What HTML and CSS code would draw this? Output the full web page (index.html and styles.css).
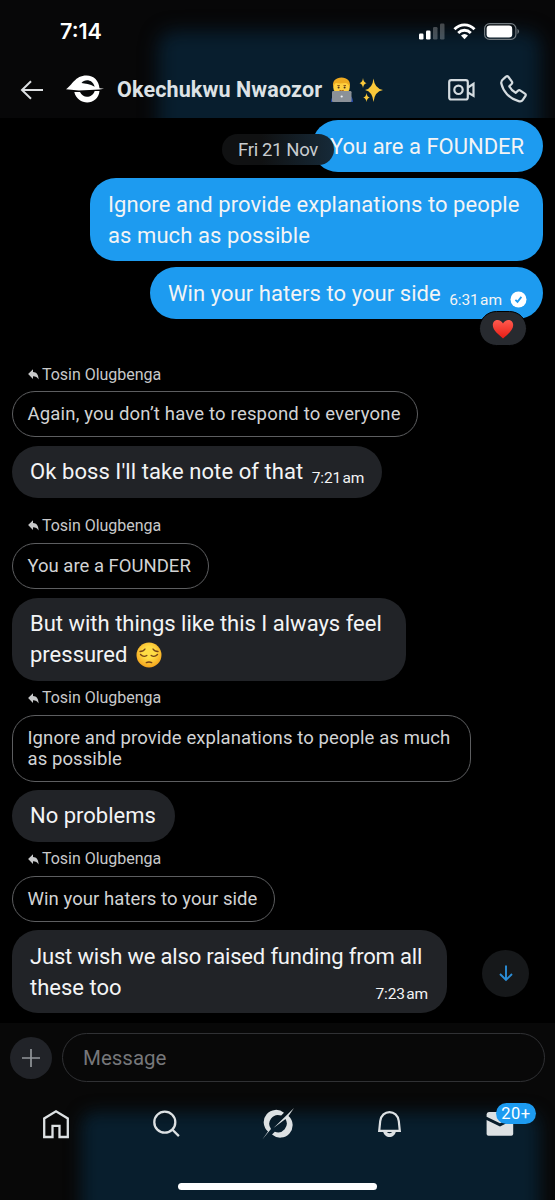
FILE: index.html
```
<!DOCTYPE html>
<html lang="en">
<head>
<meta charset="utf-8">
<title>Okechukwu Nwaozor</title>
<link rel="stylesheet" href="styles.css">
</head>
<body>
<svg class="defs" width="0" height="0" aria-hidden="true">
  <defs>
    <symbol id="reply" viewBox="0 0 11 11"><path d="M5 .3v2.600c3.500.2 5.500 2.400 5.600 7.600C9.300 8.200 7.700 7.300 5 7.300V10L.1 5z" fill="currentColor"/></symbol>
    <radialGradient id="face" cx=".5" cy=".4" r=".6"><stop offset=".4" stop-color="#ffdc45"/><stop offset="1" stop-color="#f5a31c"/></radialGradient>
    <linearGradient id="heart" x2="0" y2="1"><stop stop-color="#ff5b4f"/><stop offset="1" stop-color="#e81c14"/></linearGradient>
  </defs>
</svg>
<div class="phone">
  <header class="top">
    <div class="status">
      <span class="clock">7:14</span>
      <span class="indicators">
        <svg width="26" height="17" viewBox="0 0 26 17"><g fill="#fff"><rect x="0" y="10.500" width="4.500" height="6" rx="1.200"/><rect x="7" y="7.500" width="4.500" height="9" rx="1.200"/><g opacity=".25"><rect x="14" y="4" width="4.500" height="12.500" rx="1.200"/><rect x="21" y="0.500" width="4.500" height="16" rx="1.200"/></g></g></svg>
        <svg width="23" height="17" viewBox="0 0 23 17"><g fill="none" stroke="#fff" stroke-width="2.900"><path d="M1.500 6.200C7.200.400 15.800.400 21.500 6.200"/><path d="M5.200 10C8.900 6.400 14.100 6.400 17.800 10"/></g><path d="M8 12.500q3.500-3 7 0L11.500 16.300z" fill="#fff"/></svg>
        <svg width="36" height="17" viewBox="0 0 36 17"><rect x=".6" y=".6" width="31.300" height="15.800" rx="5" fill="none" stroke="#737b80" stroke-width="1.200"/><rect x="2.600" y="2.600" width="25.600" height="11.800" rx="3.200" fill="#fff"/><path d="M33.500 5.800q3 2.700 0 5.400z" fill="#737b80"/></svg>
      </span>
    </div>
    <div class="titlebar">
      <svg class="back" width="24" height="20" viewBox="0 0 24 20" fill="none" stroke="#dde0e2" stroke-width="2"><path d="M11 1.200 2 10l9 8.800M2 10h21"/></svg>
      <svg class="logo" width="38" height="30" viewBox="0 0 38 30"><path d="M0 15.200C6 11.500 9 1.500 20.500 1.500c7.500 0 12.300 5.300 13 12.700l4.500.6-4.500.8-20.500 1z" fill="#fff"/><path d="M15.500 9C18.500 4.800 26.500 4.800 28.700 12.800 24 10 19 9.500 15.500 9z" fill="#080b0e"/><path d="M8.300 18h5.700c3 7 12.500 6 14.700-1h4.800C32 32 11.500 32 8.300 18z" fill="#fff"/></svg>
      <span class="name">Okechukwu Nwaozor</span>
      <svg class="coder" width="24" height="26" viewBox="0 0 24 26"><path d="M1 25c0-5 3-7 5-7h12c3 0 5 3 5 7z" fill="#2546a5"/><circle cx="11.500" cy="10" r="8.300" fill="#ffd03f"/><path d="M3.200 10C2 4 6 .6 11.500.6S21 4 19.800 10C18.500 8 18 6.500 15.500 6 12 6.500 8 6.500 6 6 4.500 7 4 8 3.200 10z" fill="#eeaa20"/><path d="M7.300 8.500h2.500M13.500 8.500H16" stroke="#90541a"/><circle cx="8.600" cy="10.600" r="1" fill="#473021"/><circle cx="14.600" cy="10.600" r="1" fill="#473021"/><path d="M9.500 13.400q2.100 1 4.200 0" stroke="#a15a1c" fill="none"/><rect x="2" y="14" width="19.500" height="11" rx="1.200" fill="#8b9198"/><circle cx="11.700" cy="19.500" r="1.100" fill="#f2f3f4"/></svg>
      <svg class="sparkles" width="25" height="26" viewBox="0 0 25 26" fill="#fac83a"><path d="M14.500 1.500q1 10 9.500 11.500-8.500 1.500-9.500 12-1-10.500-8.500-12 7.500-1.500 8.500-11.500z"/><path d="M4 1q.5 4.500 3.500 5.200Q4.500 7 4 11 3.500 7 .5 6.200 3.500 5.500 4 1zM7.500 16q.5 4 3.300 4.600-2.800.7-3.300 4.400-.5-3.700-3.300-4.400 2.800-.6 3.300-4.600z"/></svg>
      <svg class="video" width="27" height="22" viewBox="0 0 27 22" fill="none" stroke="#d5dce0" stroke-width="2.200"><rect x="1.200" y="1.200" width="18.600" height="19.300" rx="2"/><circle cx="10.500" cy="10.800" r="4.200"/><path d="M20 8.500l5.500-3.600v12L20 13.500"/></svg>
      <svg class="call" width="27" height="28" viewBox="0 0 27 28" fill="none" stroke="#d5dce0" stroke-width="2.200" stroke-linejoin="round"><path d="M3.200 4.100 6 1.600Q7.300.6 8.500 2l3.400 4.600q.8 1.200-.3 2.400L9.300 11.300q2.300 4.500 6.300 6.500l2.500-2.100q1.100-.9 2.300-.1l4.500 3q1.500 1 .5 2.400l-2.800 4.100q-1.300 1.900-4 1C9 23.500 3 16 1.300 8.600q-.5-2.700 1.900-4.500z"/></svg>
    </div>
  </header>

  <main class="chat">
    <div class="date">Fri 21 Nov</div>
    <div class="bubble sent first">You are a FOUNDER</div>
    <div class="bubble sent explain">Ignore and provide explanations to people<br>as much as possible</div>
    <div class="bubble sent win">Win your haters to your side<span class="time">6:31<i></i>am</span><svg class="seen" width="17" height="17" viewBox="0 0 17 17"><circle cx="8.500" cy="8.500" r="8" fill="#fff"/><path d="m5.400 8.800 2.100 2 3.900-4.900" fill="none" stroke="#1d9bf0" stroke-width="1.800"/></svg>
      <span class="reaction"><svg width="22" height="20" viewBox="0 0 22 20"><path d="M11 19.500C7 16 .8 11.500.8 6.100c0-6 7.500-7 10.200-1.500 2.700-5.500 10.200-4.500 10.200 1.500 0 5.400-6.200 9.900-10.200 13.400z" fill="url(#heart)"/></svg></span>
    </div>

    <div class="reply-to after-reaction"><svg width="11" height="11"><use href="#reply"/></svg>Tosin Olugbenga</div>
    <div class="quote q1">Again, you don’t have to respond to everyone</div>
    <div class="bubble got ok">Ok boss I'll take note of that<span class="time">7:21<i></i>am</span></div>

    <div class="reply-to spaced"><svg width="11" height="11"><use href="#reply"/></svg>Tosin Olugbenga</div>
    <div class="quote q2">You are a FOUNDER</div>
    <div class="bubble got but">But with things like this I always feel<br>pressured <svg class="pensive" width="26" height="26" viewBox="0 0 26 26"><circle cx="13" cy="13" r="12.500" fill="url(#face)"/><g fill="none" stroke="#754417" stroke-width="1.400" stroke-linecap="round"><path d="M4 9.500q3.500 0 5-2.500M22 9.500q-3.500 0-5-2.500M4.500 12.500q3 3.200 6.300 1M21.500 12.500q-3 3.200-6.300 1M10.300 20.600q2.700-1.300 5.400 0"/></g></svg></div>

    <div class="reply-to"><svg width="11" height="11"><use href="#reply"/></svg>Tosin Olugbenga</div>
    <div class="quote q3">Ignore and provide explanations to people as much<br>as possible</div>
    <div class="bubble got no">No problems</div>

    <div class="reply-to"><svg width="11" height="11"><use href="#reply"/></svg>Tosin Olugbenga</div>
    <div class="quote q4">Win your haters to your side</div>
    <div class="bubble got wish">Just wish we also raised funding from all<br><span class="last-line">these too<span class="time">7:23<i></i>am</span></span></div>
    <div class="jump"><svg width="14" height="17" viewBox="0 0 14 17" fill="none" stroke="#2b8ed8" stroke-width="1.900"><path d="M7 .5V15M1 9l6 6 6-6"/></svg></div>
  </main>

  <footer class="bottom">
    <div class="composer">
      <span class="plus"><svg width="18" height="18" viewBox="0 0 18 18" stroke="#92969a" stroke-width="1.700"><path d="M9 0v18M0 9h18"/></svg></span>
      <div class="field">Message</div>
    </div>
    <nav class="tabs">
      <svg width="28" height="30" viewBox="0 0 28 30"><path d="M2.200 28V9.500L14 2.300 25.800 9.500V28h-8.300V16.800h-7V28z" fill="none" stroke="#dde1e3" stroke-width="2.300"/></svg>
      <svg width="28" height="30" viewBox="0 0 28 30" fill="none" stroke="#dde1e3" stroke-width="2.300"><circle cx="12.800" cy="13.200" r="10.500"/><path d="m20.500 20.800 6.400 6.300"/></svg>
      <svg width="32" height="34" viewBox="0 0 32 34" fill="#dde1e3"><path d="M.3 32.500 6 24.500A12.300 12.300 0 0 1 22 5.800L19.200 8.600A8.800 8.800 0 0 0 9 22z"/><path d="M11.500 21 32 1 26.500 9A12.300 12.300 0 0 1 10 27.500L12.800 24.700A8.800 8.800 0 0 0 23.500 12z"/></svg>
      <svg width="28" height="30" viewBox="0 0 28 30"><path d="M3.200 21.900 4.200 12.200C5.500 0 21.500 0 22.800 12.200l1 9.700z" fill="none" stroke="#dde1e3" stroke-width="2.200"/><path d="M7 22h13c-1.500 8-11.500 8-13 0z" fill="#dde1e3"/><path d="M10.800 23h5.400q-2.700 2.500-5.400 0z" fill="#081d2b"/></svg>
      <span class="mail"><svg width="28" height="30" viewBox="0 0 28 30" fill="#dde1e3"><path d="M.6 5.500q0-2.500 2.300-2.500H25q2.200 0 2.200 2.500v2.200L14 14.200.6 7.700z"/><path d="M.6 10.900 14 17.500l13.200-6.600v14q0 1.800-1.900 1.800H2.500q-1.900 0-1.900-1.800z"/></svg><b class="badge">20+</b></span>
    </nav>
    <div class="home-bar"></div>
  </footer>
</div>
</body>
</html>
```

FILE: styles.css
```
* { box-sizing: border-box; }
body { margin: 0; background: #000; font-family: Roboto, "Liberation Sans", sans-serif; color: #f3f4f5; }
svg { display: block; flex: none; }
.defs { position: absolute; }
.phone { position: relative; width: 555px; height: 1200px; overflow: hidden; display: flex; flex-direction: column; background: #000; }

.top { position: relative; height: 118px; flex: none; background: #070708; overflow: hidden; isolation: isolate; }
.top::before { content: ""; position: absolute; z-index: -1; left: 158px; top: 31px; width: 383px; height: 130px; border-radius: 16px; background: #081e2e; filter: blur(9px); }
.status { display: flex; justify-content: space-between; height: 63px; padding: 18px 35px 0 60px; }
.clock { font: 600 21.500px/27px Inter, sans-serif; letter-spacing: 0; color: #fff; }
.indicators { display: flex; gap: 8px; padding-top: 5px; }
.titlebar { display: flex; align-items: center; height: 53px; padding: 0 28px 0 20px; }
.logo { margin: -1px 0 0 22px; }
.name { margin-left: 13px; width: 207px; font-size: 21.500px; font-weight: 700; letter-spacing: .14px; color: #dde2e5; white-space: nowrap; }
.coder { margin-left: 6px; }
.sparkles { margin-left: 5px; }
.video { margin-left: auto; }
.call { margin-left: 25px; margin-top: -1px; }

.chat { position: relative; height: 905px; flex: none; display: flex; flex-direction: column; align-items: flex-start; padding: 2px 12px 0; }
.bubble { position: relative; padding: 10.500px 18px; border-radius: 26px; font-size: 22px; line-height: 31px; white-space: nowrap; }
.sent { align-self: flex-end; margin-bottom: 6px; padding-top: 11px; padding-bottom: 10px; background: #1d9bf0; width: 453px; }
.explain { letter-spacing: .08px; }
.sent.first { width: 231px; }
.sent.win { width: 393px; display: flex; margin-bottom: 0; letter-spacing: .06px; }
.got { background: #212327; margin-top: 8px; }
.ok { width: 370px; display: flex; margin-top: 9px; padding: 10px 18px 11px; letter-spacing: .07px; }
.but { width: 394px; margin-top: 9px; padding: 10px 18px 11px; }
.no { width: 163px; margin-top: 7.500px; padding: 10px 18px 11px; }
.wish { width: 435px; letter-spacing: -.17px; }
.last-line { display: flex; justify-content: space-between; letter-spacing: 0; }
.time { font-size: 15.500px; line-height: 20px; padding-top: 12px; margin-bottom: -1px; margin-left: 8.500px; letter-spacing: -.15px; }
.time i { display: inline-block; width: 1.500px; }
.last-line .time { margin-right: 1px; }
.seen { margin: 13px 0 0 8px; }
.reaction { position: absolute; right: 16px; bottom: -27px; display: grid; place-items: center; width: 48px; height: 35px; border: 1px solid #000; border-radius: 18px; background: #272a2f; }
.pensive { display: inline-block; vertical-align: -6px; margin: -3px 0 0 3px; }
.date { position: absolute; z-index: 1; left: 222px; top: 16px; width: 112px; height: 31px; border-radius: 16px; background: linear-gradient(90deg, #101112 35%, #162a39); color: #c8cccf; font-size: 18.500px; letter-spacing: -.35px; line-height: 32px; text-align: center; white-space: nowrap; }
.reply-to { display: flex; align-items: center; gap: 3.500px; height: 20px; margin: 7.500px 0 0 15.500px; font-size: 16px; letter-spacing: -.03px; line-height: 20px; color: #c8c9ca; }
.reply-to.spaced { margin-top: 17.500px; }
.reply-to.after-reaction { margin-top: 45px; padding-top: 1px; }
.quote { margin-top: 7px; padding: 12px 15px 10.500px 14.500px; border: 1px solid #5d5e60; border-radius: 23px; font-size: 18.500px; line-height: 21.500px; color: #d2d3d4; white-space: nowrap; }
.q1 { width: 406px; letter-spacing: .18px; }
.q2 { width: 197px; }
.q3 { width: 459px; margin-top: 6.500px; letter-spacing: .09px; }
.q4 { width: 263px; letter-spacing: .07px; }
.jump { position: absolute; right: 26px; bottom: 26px; display: grid; place-items: center; width: 47px; height: 47px; border-radius: 50%; background: #16181a; }

.bottom { position: relative; flex: 1; background: #080808; overflow: hidden; isolation: isolate; }
.bottom::before { content: ""; position: absolute; z-index: -1; left: 81px; top: 89px; width: 459px; height: 130px; border-radius: 14px; background: #081e2d; filter: blur(8px); }
.composer { display: flex; align-items: center; gap: 10px; padding: 10px 10px 0; }
.plus { display: grid; place-items: center; width: 42px; height: 42px; border-radius: 50%; background: #212328; }
.field { flex: 1; height: 49px; padding-left: 20px; border: 1px solid #303134; border-radius: 25px; font-size: 20.500px; line-height: 48px; color: #76777a; }
.tabs { display: flex; justify-content: space-between; align-items: center; height: 34px; margin-top: 25px; padding: 0 41px 0 42px; }
.mail { position: relative; }
.badge { position: absolute; left: 10px; top: -6px; width: 40px; height: 21px; border-radius: 11px; background: #1d9bf0; color: #fff; font-size: 16.500px; font-weight: 400; line-height: 21px; text-align: center; letter-spacing: .5px; }
.home-bar { width: 199px; height: 7px; margin: 42px auto 0; border-radius: 4px; background: #fff; }
```
